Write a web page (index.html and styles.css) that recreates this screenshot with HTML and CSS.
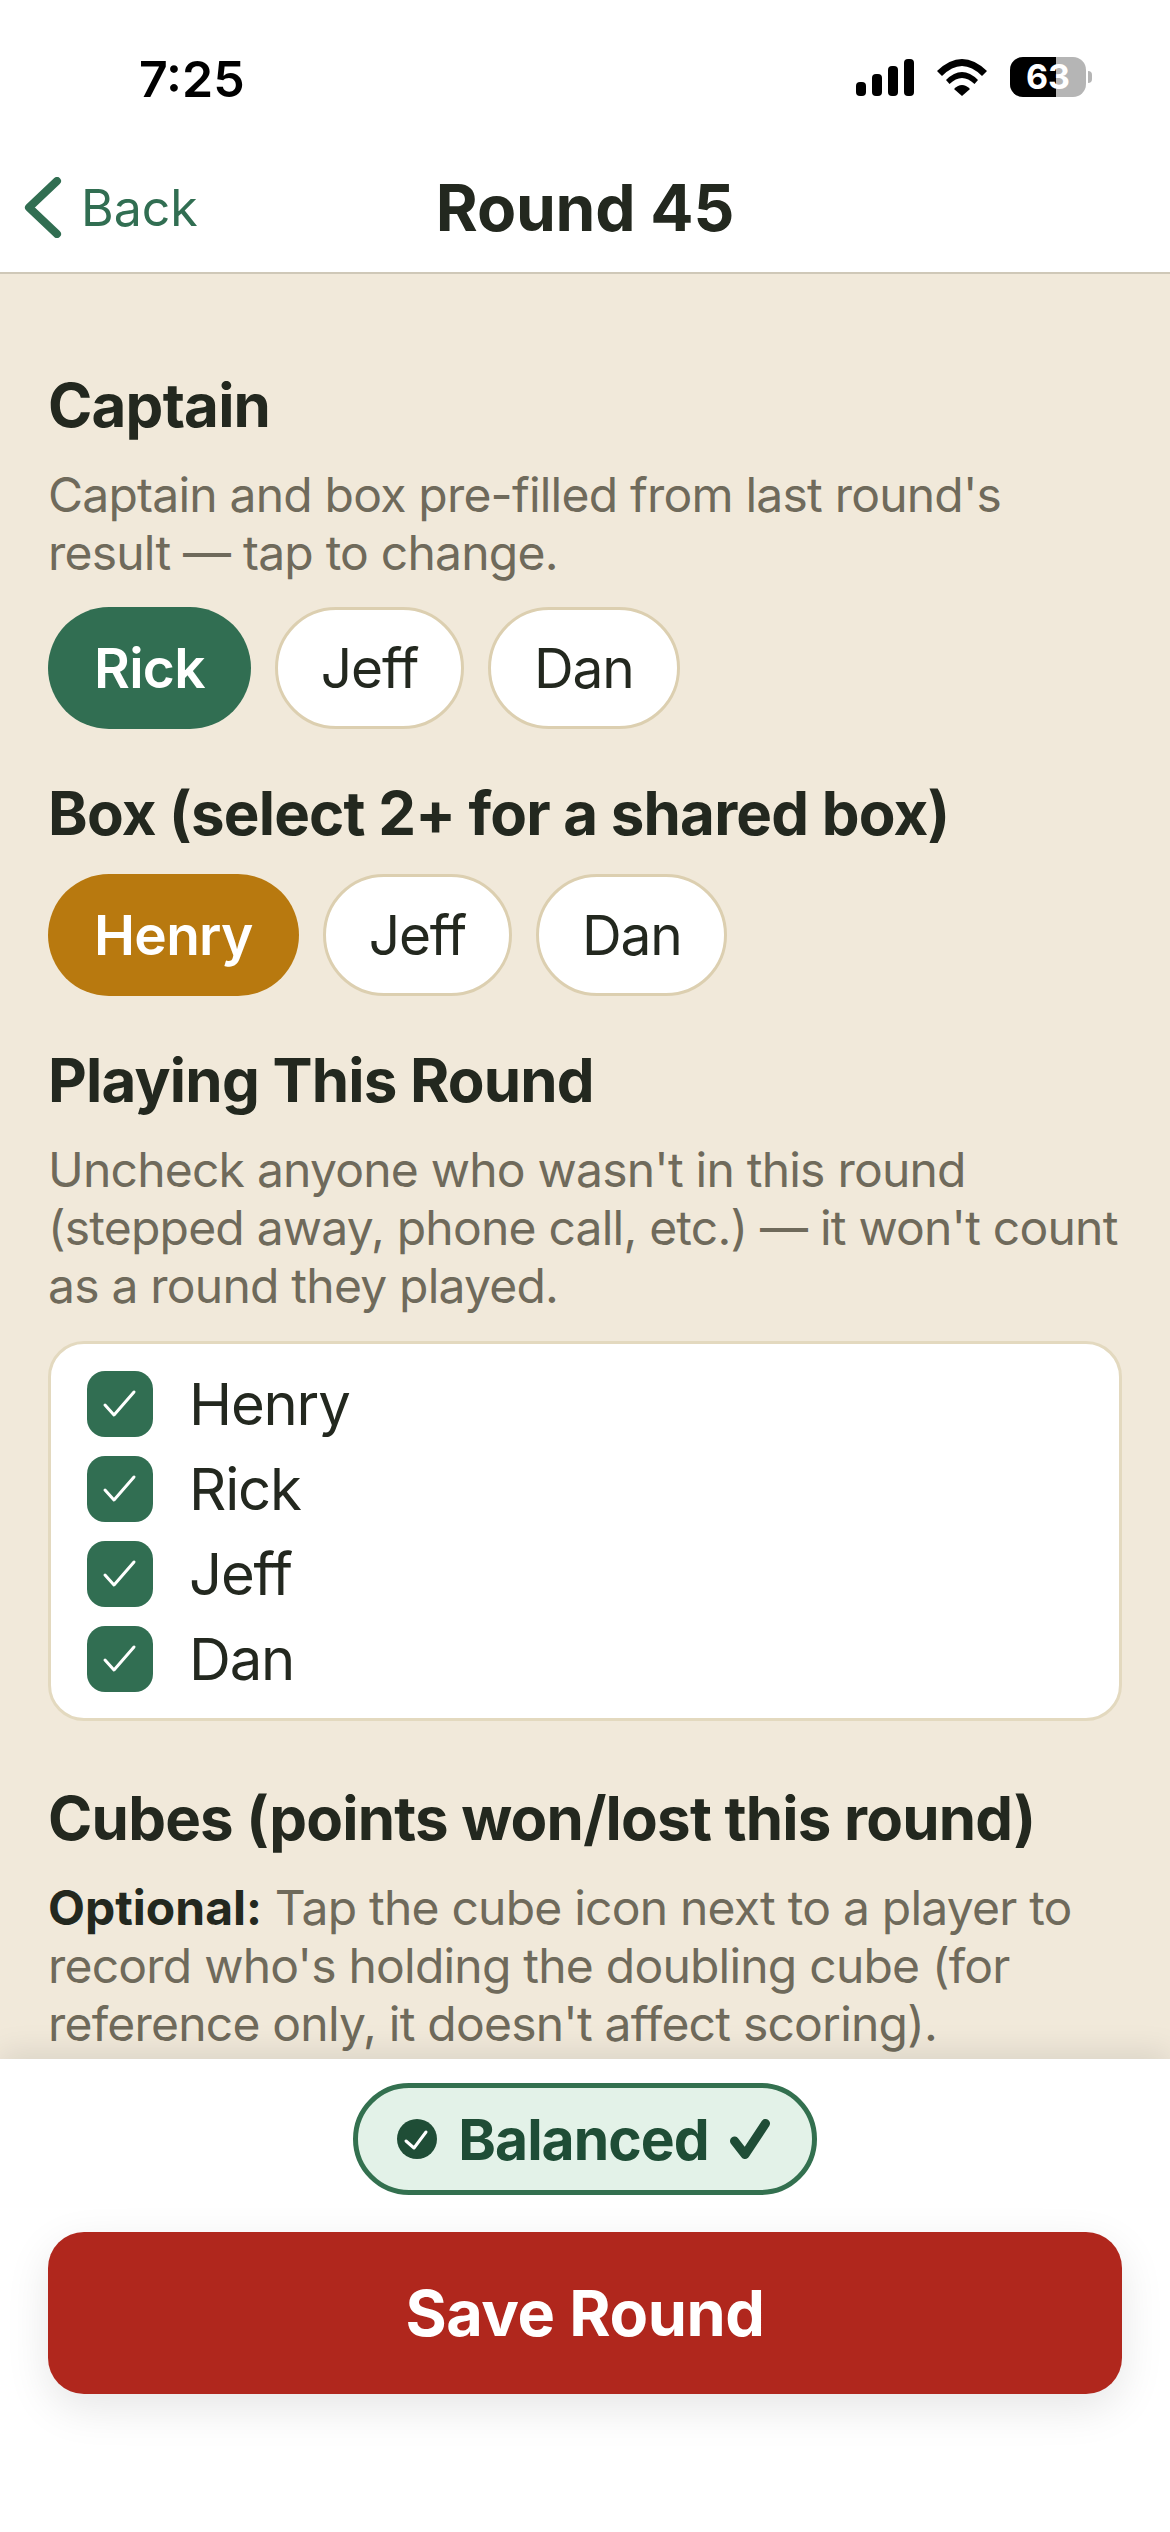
FILE: index.html
```html
<!DOCTYPE html>
<html lang="en">
<head>
<meta charset="utf-8">
<title>Round 45</title>
<link rel="stylesheet" href="styles.css">
</head>
<body>
<div class="page">
  <div class="status">
    <span class="time">7:25</span>
    <div class="status-icons">
      <svg class="signal" width="58" height="37" viewBox="0 0 58 37"><rect x="0" y="23" width="10" height="14" rx="4"/><rect x="16" y="15" width="10" height="22" rx="4"/><rect x="32" y="7" width="10" height="30" rx="4"/><rect x="48" y="0" width="10" height="37" rx="4"/></svg>
      <svg class="wifi" width="50" height="37" viewBox="0 0 50 37"><path d="M0 12 Q25 -12 50 12 L45 17 Q25 -3 5 17 Z"/><path d="M9 21 Q25 5 41 21 L37.500 25 Q25 13 12.500 25 Z"/><path d="M17 30 Q25 22 33 30 L25 37 Z"/></svg>
      <div class="battery"><div class="battery-body"><div class="battery-fill"></div><span class="battery-num">63</span></div><div class="battery-nub"></div></div>
    </div>
  </div>
  <header class="nav">
    <div class="back">
      <svg class="chev" width="40" height="61" viewBox="0 0 40 61"><path d="M34 4 L6 30.500 L34 57" fill="none" stroke="#316e52" stroke-width="8" stroke-linecap="round" stroke-linejoin="round"/></svg>
      <span>Back</span>
    </div>
    <h1 class="title">Round 45</h1>
  </header>
  <main class="content">
    <h2 class="heading">Captain</h2>
    <p class="desc">Captain and box pre-filled from last round's<br>result — tap to change.</p>
    <div class="pills">
      <span class="pill pill-green">Rick</span><span class="pill">Jeff</span><span class="pill">Dan</span>
    </div>
    <h2 class="heading section">Box (select 2+ for a shared box)</h2>
    <div class="pills">
      <span class="pill pill-amber">Henry</span><span class="pill">Jeff</span><span class="pill">Dan</span>
    </div>
    <h2 class="heading section">Playing This Round</h2>
    <p class="desc">Uncheck anyone who wasn't in this round<br>(stepped away, phone call, etc.) — it won't count<br>as a round they played.</p>
    <div class="card">
      <div class="row"><span class="box"><svg width="66" height="66" viewBox="0 0 66 66"><path d="M18 34 L27 44 L47 21" fill="none" stroke="#fff" stroke-width="3" stroke-linecap="round" stroke-linejoin="round"/></svg></span><span>Henry</span></div>
      <div class="row"><span class="box"><svg width="66" height="66" viewBox="0 0 66 66"><path d="M18 34 L27 44 L47 21" fill="none" stroke="#fff" stroke-width="3" stroke-linecap="round" stroke-linejoin="round"/></svg></span><span>Rick</span></div>
      <div class="row"><span class="box"><svg width="66" height="66" viewBox="0 0 66 66"><path d="M18 34 L27 44 L47 21" fill="none" stroke="#fff" stroke-width="3" stroke-linecap="round" stroke-linejoin="round"/></svg></span><span>Jeff</span></div>
      <div class="row"><span class="box"><svg width="66" height="66" viewBox="0 0 66 66"><path d="M18 34 L27 44 L47 21" fill="none" stroke="#fff" stroke-width="3" stroke-linecap="round" stroke-linejoin="round"/></svg></span><span>Dan</span></div>
    </div>
    <h2 class="heading cubes">Cubes (points won/lost this round)</h2>
    <p class="desc"><strong class="opt">Optional:</strong> Tap the cube icon next to a player to<br>record who's holding the doubling cube (for<br>reference only, it doesn't affect scoring).</p>
  </main>
  <footer class="footer">
    <div class="balance">
      <svg width="40" height="40" viewBox="0 0 40 40"><circle cx="20" cy="20" r="20" fill="#1f4d36"/><path d="M9 22 L17 29 L29 13" fill="none" stroke="#fff" stroke-width="3" stroke-linecap="round" stroke-linejoin="round"/></svg>
      <span>Balanced</span>
      <svg width="40" height="40" viewBox="0 0 40 40"><path d="M4.500 22 L15 35.500 L35.500 4.500" fill="none" stroke="#1f4d36" stroke-width="9" stroke-linecap="round" stroke-linejoin="round"/></svg>
    </div>
    <button class="save">Save Round</button>
  </footer>
</div>
</body>
</html>
```
FILE: styles.css
```css
* { box-sizing: border-box; }
html, body { margin: 0; padding: 0; }
body { font-family: "Inter", "Liberation Sans", sans-serif; color: #23281f; background: #fff; }
.page { width: 1170px; height: 2532px; display: flex; flex-direction: column; overflow: hidden; }

.status { height: 147px; background: #fff; display: flex; justify-content: space-between; align-items: flex-start; padding: 50px 78px 0 139px; }
.time { font-size: 50px; font-weight: 600; line-height: 56px; color: #000; margin-top: 1px; }
.status-icons { display: flex; align-items: center; gap: 23px; padding-top: 7px; }
.battery { display: flex; align-items: center; gap: 2px; }
.battery-body { position: relative; width: 76px; height: 40px; border-radius: 13px; background: #b5b5b5; overflow: hidden; display: flex; align-items: center; justify-content: center; }
.battery-fill { position: absolute; left: 0; top: 0; bottom: 0; width: 46px; background: #000; }
.battery-num { position: relative; color: #fff; font-size: 34px; font-weight: 700; line-height: 40px; }
.battery-nub { width: 4px; height: 12px; background: #b5b5b5; border-radius: 0 6px 6px 0; }

.nav { position: relative; height: 127px; background: #fff; border-bottom: 2px solid #cfc8b8; padding-bottom: 4px; display: flex; align-items: center; justify-content: center; }
.back { position: absolute; left: 23px; top: 0; height: 121px; display: flex; align-items: center; gap: 18px; color: #316e52; font-size: 50px; }
.title { margin: 0; font-size: 64px; font-weight: 700; line-height: 70px; letter-spacing: -0.2px; }

.content { flex: 1; min-height: 0; overflow: hidden; background: #f1e9da; padding: 96px 48px 0; }
.heading { margin: 0; font-size: 60px; font-weight: 700; line-height: 70px; letter-spacing: -0.8px; }
.section { margin-top: 49px; }
.cubes { margin-top: 62px; }
.desc { margin: 26px 0 0; font-size: 48px; line-height: 58px; letter-spacing: -0.78px; color: #6f6a5b; }
.opt { color: #23281f; font-weight: 700; letter-spacing: 0; }
.pills { display: flex; gap: 24px; margin-top: 26px; }
.desc + .pills { margin-top: 25px; }
.pill { height: 122px; border-radius: 61px; padding: 0 43px; display: flex; align-items: center; background: #fff; border: 3px solid #dccfb0; font-size: 55px; letter-spacing: -1.2px; }
.pill-green, .pill-amber { color: #fff; font-weight: 600; padding: 0 46px; border: 0; letter-spacing: -0.7px; }
.pill-green { background: #316e52; }
.pill-amber { background: #b8790f; }

.card { margin-top: 26px; height: 380px; background: #fff; border: 3px solid #e3d9bf; border-radius: 36px; padding: 27px 36px 0; }
.row { display: flex; align-items: flex-start; gap: 36px; height: 85px; font-size: 58px; line-height: 66px; letter-spacing: -1.2px; }
.box { width: 66px; height: 66px; border-radius: 18px; background: #316e52; flex: none; }
.box svg { display: block; }

.footer { position: relative; height: 473px; background: #fff; box-shadow: 0 -6px 30px rgba(0,0,0,.1); padding: 24px 48px 0; display: flex; flex-direction: column; align-items: center; }
.balance { height: 112px; border-radius: 56px; background: #e3f2e8; border: 5px solid #33704f; padding: 0 42px 0 39px; display: flex; align-items: center; gap: 21px; color: #1f4d36; font-size: 57px; font-weight: 700; letter-spacing: -1px; }
.save { margin-top: 37px; width: 100%; height: 162px; border: 0; border-radius: 36px; background: #b0271d; color: #fff; font-family: inherit; font-size: 63px; font-weight: 700; letter-spacing: -0.4px; box-shadow: 0 14px 44px rgba(0,0,0,.1); }
```
